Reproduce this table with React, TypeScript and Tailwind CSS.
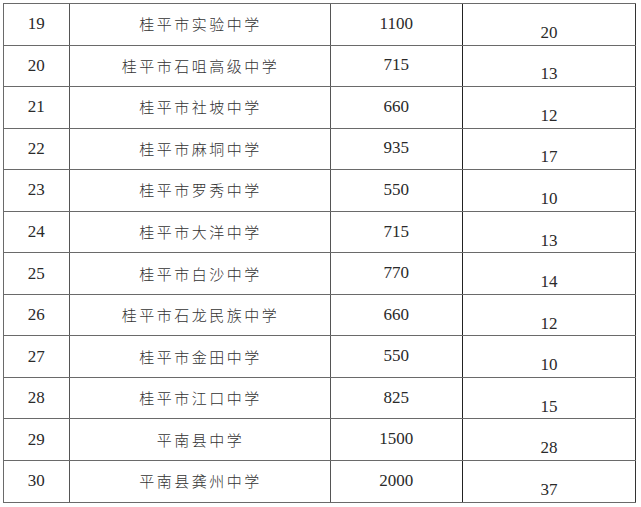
const rows = [
  ['19', '桂平市实验中学', '1100', '20'],
  ['20', '桂平市石咀高级中学', '715', '13'],
  ['21', '桂平市社坡中学', '660', '12'],
  ['22', '桂平市麻垌中学', '935', '17'],
  ['23', '桂平市罗秀中学', '550', '10'],
  ['24', '桂平市大洋中学', '715', '13'],
  ['25', '桂平市白沙中学', '770', '14'],
  ['26', '桂平市石龙民族中学', '660', '12'],
  ['27', '桂平市金田中学', '550', '10'],
  ['28', '桂平市江口中学', '825', '15'],
  ['29', '平南县中学', '1500', '28'],
  ['30', '平南县龚州中学', '2000', '37'],
]

const num = "font-['Liberation_Serif',serif] text-[17px] leading-[20px] text-[#2a2a2a]"
const cjk = "font-['Noto_Sans_CJK_SC',sans-serif] text-[15px] leading-[20px] tracking-[2.5px] text-[#333] font-light"

export default function App() {
  return (
    <div className="w-[641px] h-[507px] bg-white overflow-hidden">
      <div className="ml-[3px] mt-[3px] w-[633px] border-t border-l border-[#6a6a6a]">
        {rows.map((r) => (
          <div key={r[0]} className="flex h-[41.56px] border-b border-[#6a6a6a]">
            <div className={`w-[65.5px] flex items-center justify-center border-r border-[#555] ${num}`}>
              {r[0]}
            </div>
            <div className={`w-[261px] flex items-center justify-center border-r border-[#555] pl-[2px] ${cjk}`}>
              {r[1]}
            </div>
            <div className={`w-[132.5px] flex items-center justify-center border-r border-[#222] pb-[1px] ${num}`}>
              {r[2]}
            </div>
            <div className={`flex-1 flex items-center justify-center border-r border-[#333] pt-[17px] ${num}`}>
              {r[3]}
            </div>
          </div>
        ))}
      </div>
    </div>
  )
}
